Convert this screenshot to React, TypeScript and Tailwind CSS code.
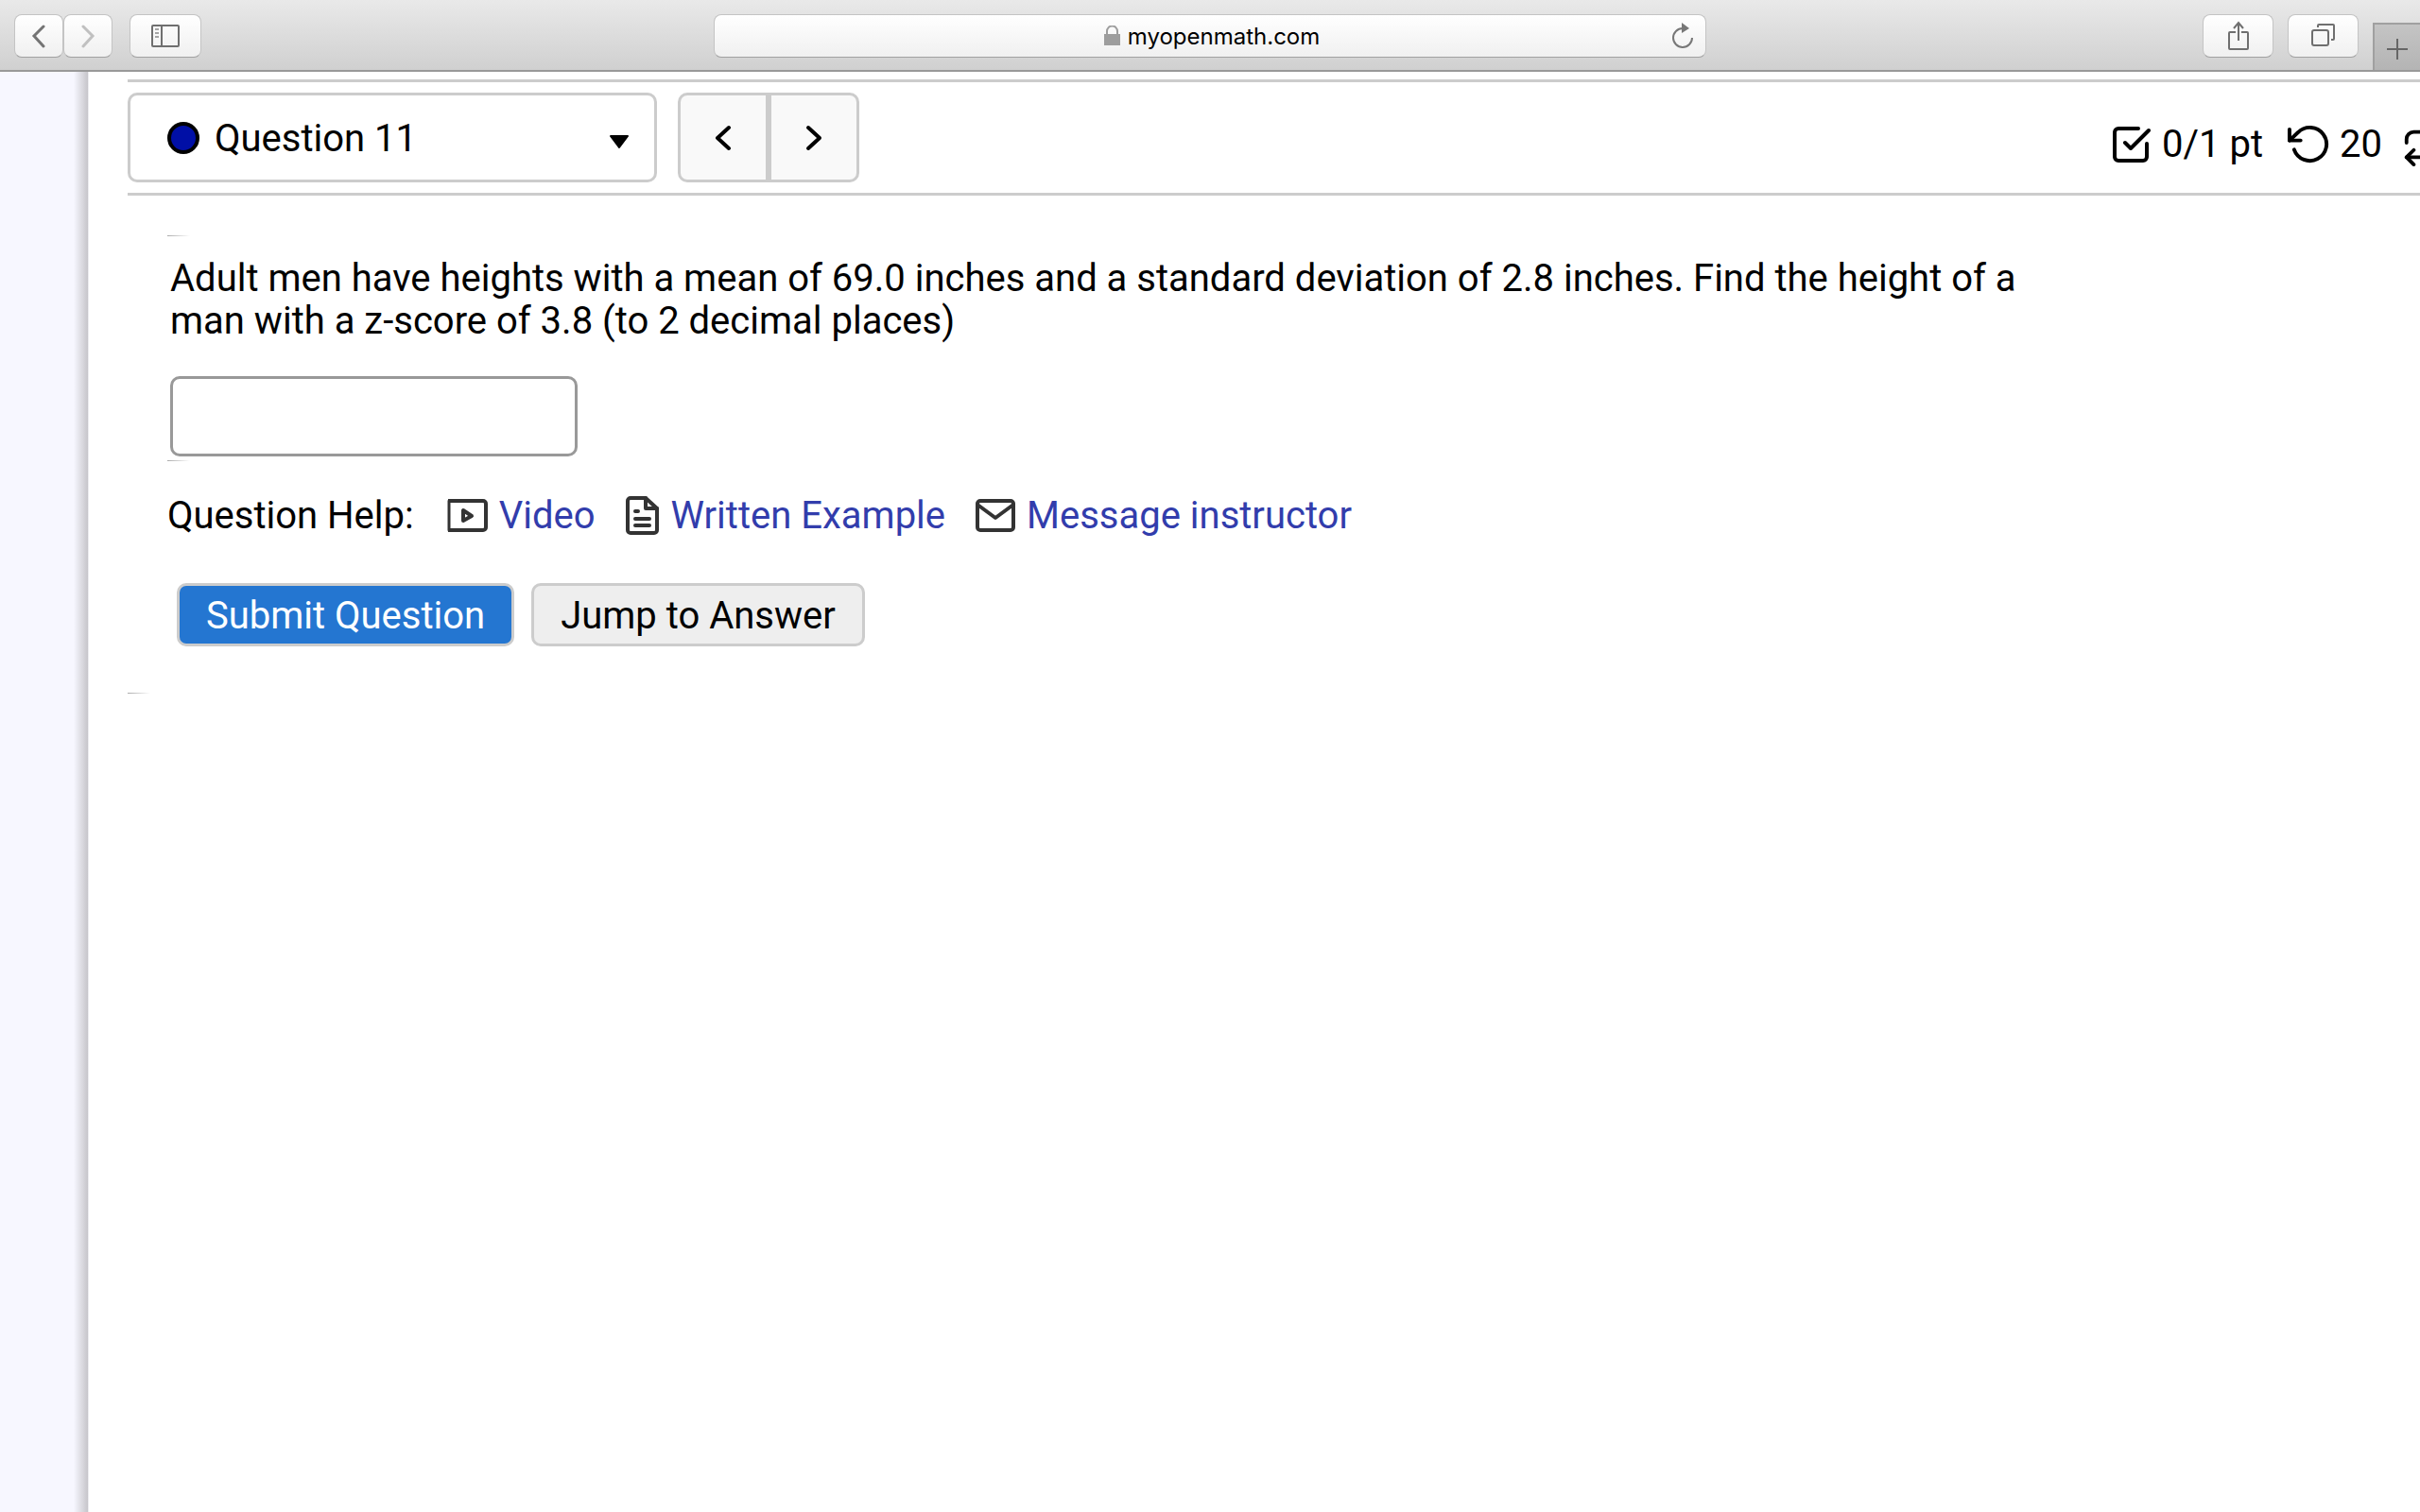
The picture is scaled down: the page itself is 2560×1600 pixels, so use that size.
import type { ComponentProps, ReactNode } from "react"
import { clsx } from "clsx"

const chromeSurface =
  "flex h-[46px] items-center justify-center border border-[#c4c4c4] border-b-[#a0a0a0] bg-linear-to-b from-white to-[#f0f0f0]"

function ChromeButton({ className, ...props }: ComponentProps<"button">) {
  return <button type="button" className={clsx(chromeSurface, "rounded-lg", className)} {...props} />
}

function BrowserBar() {
  return (
    <header className="grid h-[76px] grid-cols-[1fr_41%_1fr] border-b-2 border-[#999] bg-linear-to-b from-[#e9e9e9] to-[#d0d0d0]">
      <div className="flex pt-[15px] pl-[15px]">
        <ChromeButton className="w-[52px]" aria-label="Back">
          <svg width="16" height="26" fill="none" stroke="#747474" strokeWidth="3" strokeLinecap="round">
            <path d="M13 3 3 13l10 11" />
          </svg>
        </ChromeButton>
        <ChromeButton className="w-[52px]" aria-label="Forward">
          <svg width="16" height="26" fill="none" stroke="#c0c0c0" strokeWidth="3" strokeLinecap="round">
            <path d="m3 3 10 10L3 24" />
          </svg>
        </ChromeButton>
        <ChromeButton className="ml-[18px] w-[76px]" aria-label="Show sidebar">
          <svg width="30" height="24" fill="none" stroke="#6f6f6f" strokeWidth="2">
            <rect x="1" y="1" width="28" height="22" rx="1" />
            <path d="M11 1v22" />
            <path stroke="#a5a5a5" d="M4 5h4M4 9h4M4 13h4" />
          </svg>
        </ChromeButton>
      </div>

      <div className="pt-[15px]">
        <div className={clsx(chromeSurface, "rounded-lg pr-3 pl-10")}>
          <div className="flex flex-1 items-center justify-center gap-2">
            <svg width="17" height="22" className="shrink-0">
              <rect y="9" width="17" height="12" fill="#9d9d9d" />
              <path d="M3 10V6a5 5 0 0 1 11 0v4" fill="none" stroke="#9d9d9d" strokeWidth="2" />
            </svg>
            <span className="pt-px font-[Inter,sans-serif] text-2xl text-black">myopenmath.com</span>
          </div>
          <button type="button" aria-label="Reload">
            <svg width="24" height="28" fill="none" stroke="#777" strokeWidth="2">
              <path d="M12 6a10 10 0 1 0 10 10" />
              <path d="M11 0v11l8-5z" fill="#777" stroke="none" />
            </svg>
          </button>
        </div>
      </div>

      <div className="flex justify-end gap-[15px]">
        <ChromeButton className="mt-[15px] w-[75px]" aria-label="Share">
          <svg width="24" height="32" fill="none" stroke="#6f6f6f" strokeWidth="2">
            <path d="M9 12H3a1 1 0 0 0-1 1v16a1 1 0 0 0 1 1h18a1 1 0 0 0 1-1V13a1 1 0 0 0-1-1h-6" />
            <path d="M12 21V2M7 8l5-6 5 6" />
          </svg>
        </ChromeButton>
        <ChromeButton className="mt-[15px] w-[75px]" aria-label="Show all tabs">
          <svg width="26" height="26" fill="none" stroke="#6f6f6f" strokeWidth="2">
            <rect x="1" y="7" width="17" height="16" rx="2" />
            <path d="M7 4V2a1 1 0 0 1 1-1h15a1 1 0 0 1 1 1v14a1 1 0 0 1-1 1h-2" />
          </svg>
        </ChromeButton>
        <button
          type="button"
          aria-label="New tab"
          className="mt-6 flex h-[50px] w-[50px] items-center justify-center border-t-2 border-l-2 border-[#a0a0a0] bg-linear-to-b from-[#c4c4c4] to-[#b4b4b4] pt-1"
        >
          <svg width="22" height="22" stroke="#666" strokeWidth="2">
            <path d="M11 0v22M0 11h22" />
          </svg>
        </button>
      </div>
    </header>
  )
}

function QuestionPicker() {
  return (
    <div className="flex h-[95px] w-[560px] items-center rounded-[10px] border-3 border-[#ccc] pr-[26px] pl-[39px]">
      <svg width="34" height="34" className="shrink-0">
        <circle cx="17" cy="17" r="15" fill="#000fa6" stroke="#000" strokeWidth="4" />
      </svg>
      <select
        aria-label="Question"
        defaultValue="11"
        className="ml-4 min-w-0 flex-1 appearance-none bg-transparent pt-px leading-[45px] outline-none"
      >
        <option value="11">Question 11</option>
      </select>
      <svg width="22" height="16" className="mt-2 shrink-0">
        <path d="M2 2h18l-9 12z" stroke="#000" strokeWidth="2" strokeLinejoin="round" />
      </svg>
    </div>
  )
}

function Score() {
  return (
    <div className="ml-auto flex items-center pt-[14px] leading-[45px]">
      <svg width="41" height="40" fill="none" stroke="currentColor" strokeWidth="4" strokeLinecap="round" strokeLinejoin="round">
        <path d="M28 3H7a4 4 0 0 0-4 4v26a4 4 0 0 0 4 4h26a4 4 0 0 0 4-4V19" />
        <path d="m14 18 6 6L39 5" />
      </svg>
      <span className="ml-3">0/1 pt</span>
      <svg
        width="47"
        height="47"
        viewBox="0 0 24 24"
        fill="none"
        stroke="currentColor"
        strokeWidth="2"
        strokeLinecap="round"
        strokeLinejoin="round"
        className="ml-[26px]"
      >
        <path d="M1 4v6h6" />
        <path d="M3.51 15a9 9 0 1 0 2.13-9.36L1 10" />
      </svg>
      <span className="ml-2">20</span>
      <span className="ml-5 flex w-5 overflow-hidden">
        <svg
          width="46"
          height="46"
          viewBox="0 0 24 24"
          fill="none"
          stroke="currentColor"
          strokeWidth="2"
          strokeLinecap="round"
          strokeLinejoin="round"
          className="shrink-0"
        >
          <path d="m17 1 4 4-4 4" />
          <path d="M3 11V9a4 4 0 0 1 4-4h14" />
          <path d="m7 23-4-4 4-4" />
          <path d="M21 13v2a4 4 0 0 1-4 4H3" />
        </svg>
      </span>
    </div>
  )
}

function HelpLink({ icon, children }: { icon: ReactNode; children: ReactNode }) {
  return (
    <a href="#" className="flex items-center gap-3 text-[#323dac]">
      {icon}
      {children}
    </a>
  )
}

const helpIcon = {
  fill: "none",
  stroke: "#333",
  strokeWidth: 4,
  strokeLinecap: "round",
  strokeLinejoin: "round",
} as const

// short fading hairline that separates the blocks
function Hairline({ className }: { className?: string }) {
  return <div className={clsx("h-px w-6 bg-linear-to-r from-[#aaa] to-white", className)} />
}

const navButton = "flex h-[95px] w-24 items-center justify-center border-3 border-[#ccc] bg-[#f9f9f9]"
const actionButton = "h-[67px] rounded-[10px] border-3 border-[#ccc] pt-px leading-[45px]"

export default function App() {
  return (
    <div className="flex min-h-screen flex-col overflow-hidden bg-white font-[Roboto,sans-serif] text-[40px] leading-[45px] text-black">
      <BrowserBar />
      <div className="flex flex-1">
        <aside className="flex w-[94px] shrink-0 justify-end bg-[#f7f7ff]">
          <div className="w-4 border-r border-[#ececf0] bg-linear-to-r from-[#f7f7ff] to-[#c6c5ca]" />
        </aside>

        <main className="flex-1 pt-2 pl-[41px]">
          <div className="flex border-y-3 border-[#ccc] py-[11px]">
            <QuestionPicker />
            <div className="ml-[22px] flex">
              <button type="button" aria-label="Previous question" className={clsx(navButton, "rounded-l-[10px]")}>
                <svg width="18" height="28" fill="none" stroke="currentColor" strokeWidth="4" strokeLinecap="round" strokeLinejoin="round">
                  <path d="M15 3 3 14l12 11" />
                </svg>
              </button>
              <button type="button" aria-label="Next question" className={clsx(navButton, "rounded-r-[10px]")}>
                <svg width="18" height="28" fill="none" stroke="currentColor" strokeWidth="4" strokeLinecap="round" strokeLinejoin="round">
                  <path d="m3 3 12 11L3 25" />
                </svg>
              </button>
            </div>
            <Score />
          </div>

          <form className="pl-[42px]" onSubmit={(e) => e.preventDefault()}>
            <Hairline className="mt-[42px]" />
            <label htmlFor="answer" className="mt-[22px] ml-[3px] block max-w-[2000px]">
              Adult men have heights with a mean of 69.0 inches and a standard deviation of 2.8 inches. Find the height of
              a man with a z-score of 3.8 (to 2 decimal places)
            </label>
            <input
              id="answer"
              type="text"
              autoComplete="off"
              className="mt-9 ml-[3px] block h-[85px] w-[431px] rounded-[10px] border-3 border-[#999] px-4 outline-none"
            />
            <Hairline className="mt-1" />

            <div className="mt-[35px] flex items-center">
              <span>Question Help:</span>
              <div className="ml-[34px] flex items-center gap-8">
                <HelpLink
                  icon={
                    <svg width="44" height="38" {...helpIcon}>
                      <path d="M2 3h37a3 3 0 0 1 3 3v25a3 3 0 0 1-3 3H2" strokeLinecap="butt" />
                      <path d="M3 3v31" strokeWidth="3" />
                      <path d="M18 13v11l9-5z" />
                    </svg>
                  }
                >
                  Video
                </HelpLink>
                <HelpLink
                  icon={
                    <svg width="36" height="44" {...helpIcon}>
                      <path d="M22 3H6a3 3 0 0 0-3 3v31a3 3 0 0 0 3 3h25a3 3 0 0 0 3-3V14z" />
                      <path d="M22 3v11h12M11 17h3M11 25h15M11 32h15" />
                    </svg>
                  }
                >
                  Written Example
                </HelpLink>
                <HelpLink
                  icon={
                    <svg width="42" height="38" {...helpIcon}>
                      <rect x="2" y="3" width="38" height="31" rx="3" />
                      <path d="m2 7 19 14L40 7" />
                    </svg>
                  }
                >
                  Message instructor
                </HelpLink>
              </div>
            </div>

            <div className="mt-[49px] ml-[10px] flex gap-[18px]">
              <button type="submit" className={clsx(actionButton, "w-[357px] bg-[#2476d1] text-white")}>
                Submit Question
              </button>
              <button type="button" className={clsx(actionButton, "w-[353px] bg-[#eee]")}>
                Jump to Answer
              </button>
            </div>
          </form>
          <Hairline className="mt-[49px]" />
        </main>
      </div>
    </div>
  )
}
